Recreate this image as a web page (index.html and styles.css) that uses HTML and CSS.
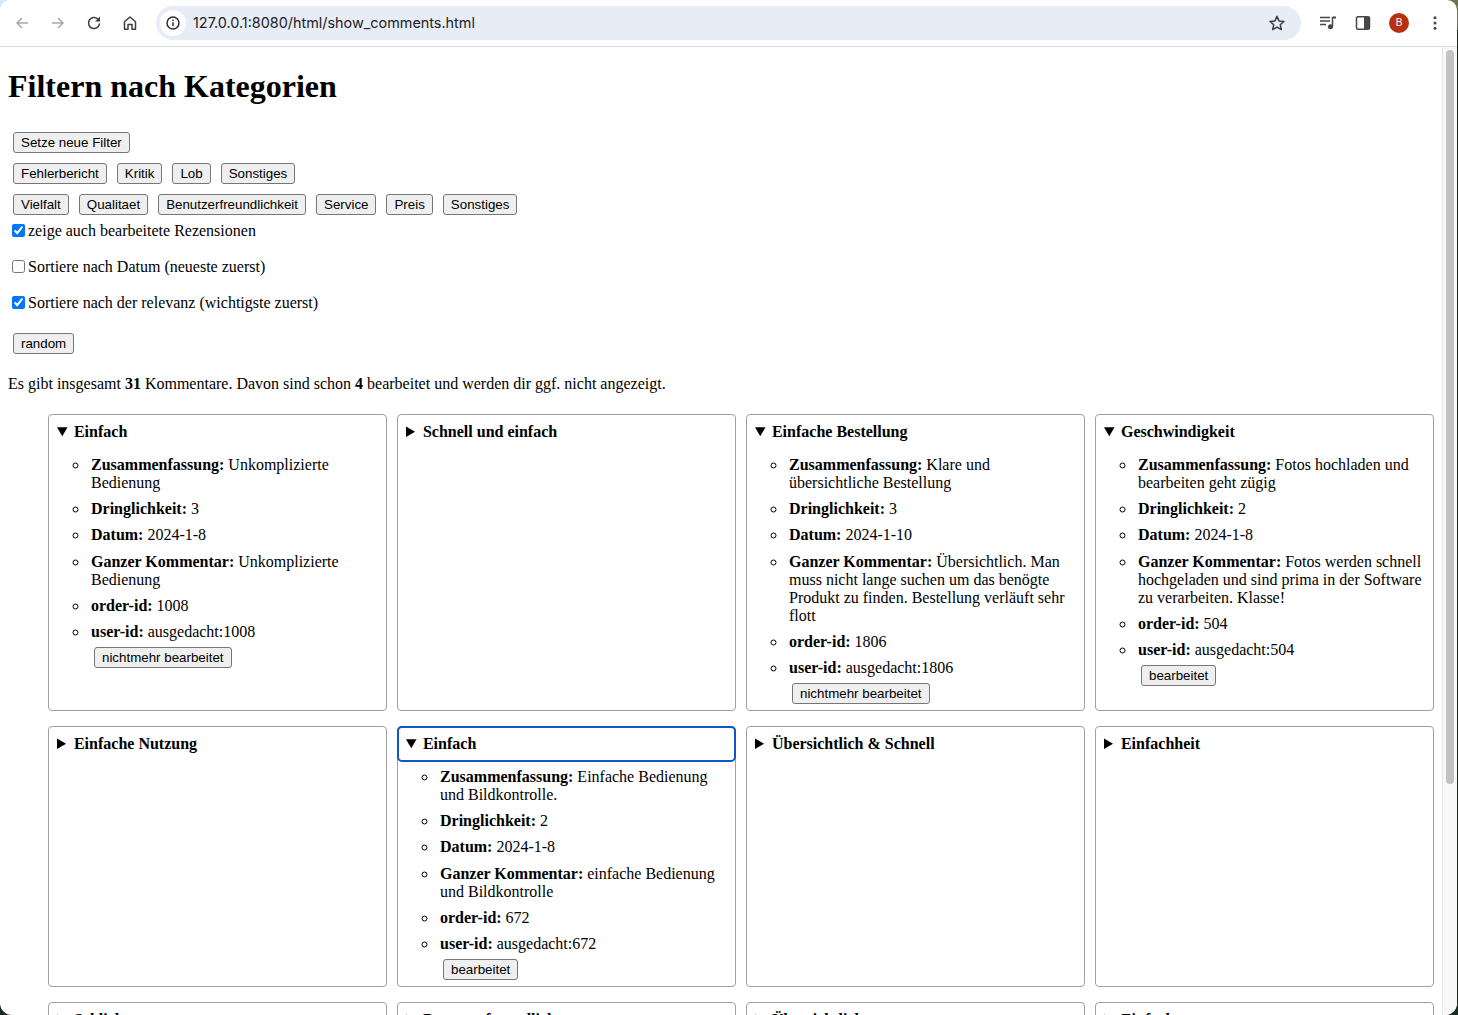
FILE: index.html
```html
<!DOCTYPE html>
<html lang="en">

<head>
    <meta charset="UTF-8">
    <title>show_comments</title>
    <link rel="stylesheet" href="styles.css">
</head>

<body>
    <div class="window">
        <div class="toolbar">
            <svg class="tool-icon first" viewBox="0 0 16 16"><path d="M14 8H3M8 3 3 8l5 5" fill="none" stroke="#a8a9ab" stroke-width="1.5"/></svg>
            <svg class="tool-icon" viewBox="0 0 16 16"><path d="M2 8h11M8 3l5 5-5 5" fill="none" stroke="#a8a9ab" stroke-width="1.5"/></svg>
            <svg class="tool-icon" viewBox="0 0 16 16"><path d="M13.500 8.500A5.500 5.500 0 1 1 11.800 4" fill="none" stroke="#3c3e41" stroke-width="1.600"/><path d="M14 1.500v5H9z" fill="#3c3e41"/></svg>
            <svg class="tool-icon" viewBox="0 0 16 16"><path d="M2.500 14.200V6.800L8 2l5.500 4.800v7.400H10V9.500H6v4.700z" fill="none" stroke="#3c3e41" stroke-width="1.500" stroke-linejoin="round"/></svg>
            <div class="omnibox">
                <span class="site-info">
                    <svg width="16" height="16" viewBox="0 0 16 16"><circle cx="8" cy="8" r="6" fill="none" stroke="#2b2d30" stroke-width="1.500"/><path d="M8 7.200v4M8 4.600v1.300" stroke="#2b2d30" stroke-width="1.500"/></svg>
                </span>
                <span class="url">127.0.0.1:8080/html/show_comments.html</span>
                <svg class="star" width="18" height="18" viewBox="0 0 18 18"><path d="M9 2.300l2 4.600 5 .5-3.800 3.300 1.100 4.900L9 13.100l-4.300 2.500 1.100-4.900L2 7.400l5-.5z" fill="none" stroke="#3c3e41" stroke-width="1.500" stroke-linejoin="round"/></svg>
            </div>
            <svg class="tool-icon media" viewBox="0 0 18 18"><path d="M1 3.500h10M1 7h10M1 10.500h6" stroke="#45474a" stroke-width="1.500"/><path d="M13.500 3v9" stroke="#45474a" stroke-width="1.500"/><path d="M13.500 2.500H17v2h-3.500z" fill="#45474a"/><circle cx="11.500" cy="12.800" r="2.500" fill="#45474a"/></svg>
            <svg class="tool-icon panel" viewBox="0 0 16 16"><rect x="1.500" y="1.800" width="13" height="12.400" rx="1.500" fill="none" stroke="#45474a" stroke-width="1.500"/><rect x="9" y="2" width="5.500" height="12" fill="#45474a"/></svg>
            <span class="avatar">B</span>
            <svg class="tool-icon dots" viewBox="0 0 16 16"><circle cx="8" cy="2.800" r="1.500" fill="#45474a"/><circle cx="8" cy="8" r="1.500" fill="#45474a"/><circle cx="8" cy="13.200" r="1.500" fill="#45474a"/></svg>
        </div>
        <div class="viewport">
            <main class="page">
                <h1>Filtern nach Kategorien</h1>
                <div class="button-row"><button>Setze neue Filter</button></div>
                <div class="button-row">
                    <button>Fehlerbericht</button>
                    <button>Kritik</button>
                    <button>Lob</button>
                    <button>Sonstiges</button>
                </div>
                <div class="button-row">
                    <button>Vielfalt</button>
                    <button>Qualitaet</button>
                    <button>Benutzerfreundlichkeit</button>
                    <button>Service</button>
                    <button>Preis</button>
                    <button>Sonstiges</button>
                </div>
                <label class="check"><input type="checkbox" checked> zeige auch bearbeitete Rezensionen</label>
                <label class="check"><input type="checkbox"> Sortiere nach Datum (neueste zuerst)</label>
                <label class="check"><input type="checkbox" checked> Sortiere nach der relevanz (wichtigste zuerst)</label>
                <div class="button-row random"><button>random</button></div>
                <p class="summary-line">Es gibt insgesamt <b>31</b> Kommentare. Davon sind schon <b>4</b> bearbeitet und werden dir ggf. nicht angezeigt.</p>

                <div class="comment-grid">
                    <details class="card" open>
                        <summary>Einfach</summary>
                        <ul>
                            <li><b>Zusammenfassung:</b> Unkomplizierte Bedienung</li>
                            <li><b>Dringlichkeit:</b> 3</li>
                            <li><b>Datum:</b> 2024-1-8</li>
                            <li><b>Ganzer Kommentar:</b> Unkomplizierte Bedienung</li>
                            <li><b>order-id:</b> 1008</li>
                            <li><b>user-id:</b> ausgedacht:1008<br><button>nichtmehr bearbeitet</button></li>
                        </ul>
                    </details>
                    <details class="card">
                        <summary>Schnell und einfach</summary>
                    </details>
                    <details class="card" open>
                        <summary>Einfache Bestellung</summary>
                        <ul>
                            <li><b>Zusammenfassung:</b> Klare und übersichtliche Bestellung</li>
                            <li><b>Dringlichkeit:</b> 3</li>
                            <li><b>Datum:</b> 2024-1-10</li>
                            <li><b>Ganzer Kommentar:</b> Übersichtlich. Man muss nicht lange suchen um das benögte Produkt zu finden. Bestellung verläuft sehr flott</li>
                            <li><b>order-id:</b> 1806</li>
                            <li><b>user-id:</b> ausgedacht:1806<br><button>nichtmehr bearbeitet</button></li>
                        </ul>
                    </details>
                    <details class="card" open>
                        <summary>Geschwindigkeit</summary>
                        <ul>
                            <li><b>Zusammenfassung:</b> Fotos hochladen und bearbeiten geht zügig</li>
                            <li><b>Dringlichkeit:</b> 2</li>
                            <li><b>Datum:</b> 2024-1-8</li>
                            <li><b>Ganzer Kommentar:</b> Fotos werden schnell hochgeladen und sind prima in der Software zu verarbeiten. Klasse!</li>
                            <li><b>order-id:</b> 504</li>
                            <li><b>user-id:</b> ausgedacht:504<br><button>bearbeitet</button></li>
                        </ul>
                    </details>

                    <details class="card">
                        <summary>Einfache Nutzung</summary>
                    </details>
                    <details class="card" open>
                        <summary class="focused">Einfach</summary>
                        <ul>
                            <li><b>Zusammenfassung:</b> Einfache Bedienung und Bildkontrolle.</li>
                            <li><b>Dringlichkeit:</b> 2</li>
                            <li><b>Datum:</b> 2024-1-8</li>
                            <li><b>Ganzer Kommentar:</b> einfache Bedienung und Bildkontrolle</li>
                            <li><b>order-id:</b> 672</li>
                            <li><b>user-id:</b> ausgedacht:672<br><button>bearbeitet</button></li>
                        </ul>
                    </details>
                    <details class="card">
                        <summary>Übersichtlich &amp; Schnell</summary>
                    </details>
                    <details class="card">
                        <summary>Einfachheit</summary>
                    </details>

                    <details class="card">
                        <summary>Schlicht</summary>
                    </details>
                    <details class="card">
                        <summary>Benutzerfreundlich</summary>
                    </details>
                    <details class="card">
                        <summary>Übersichtlich</summary>
                    </details>
                    <details class="card">
                        <summary>Einfach</summary>
                    </details>
                </div>
            </main>
            <div class="scrollbar"><div class="scroll-thumb"></div></div>
        </div>
    </div>
</body>

</html>
```

FILE: styles.css
```css
html, body {
    margin: 0;
    height: 100%;
    overflow: hidden;
}
body {
    background: linear-gradient(90deg, #d8e6fb 50%, #6f7550 50%) top / 100% 30px no-repeat, #1c2a24;
}
.window {
    height: 1015px;
    margin-right: 1px;
    display: flex;
    flex-direction: column;
    background-color: white;
    border-radius: 10px 10px 12px 12px;
    overflow: hidden;
}
.toolbar {
    flex: none;
    height: 46px;
    display: flex;
    align-items: center;
    border-bottom: 1px solid #dadce0;
    box-sizing: content-box;
}
.tool-icon {
    flex: none;
    width: 16px;
    height: 16px;
    margin-left: 20px;
}
.tool-icon.first {
    margin-left: 14px;
}
.omnibox {
    flex: 1;
    height: 34px;
    margin: 0 18px 0 18px;
    padding: 0 15px 0 4px;
    display: flex;
    align-items: center;
    background-color: #e8ecf6;
    border-radius: 17px;
}
.site-info {
    width: 26px;
    height: 26px;
    border-radius: 50%;
    background-color: white;
    display: flex;
    align-items: center;
    justify-content: center;
}
.url {
    flex: 1;
    margin-left: 7px;
    margin-bottom: 1px;
    font-family: Inter, "Liberation Sans", sans-serif;
    font-size: 14.4px;
    color: #202124;
}
.tool-icon.media {
    width: 18px;
    height: 18px;
    margin-left: 0;
}
.tool-icon.panel {
    margin-left: 18px;
}
.avatar {
    flex: none;
    width: 20px;
    height: 20px;
    margin-left: 18px;
    border-radius: 50%;
    background-color: #b9300f;
    color: white;
    font-family: "Liberation Sans", sans-serif;
    font-size: 10px;
    line-height: 20px;
    text-align: center;
}
.tool-icon.dots {
    margin-left: 18px;
    margin-right: 14px;
}
.viewport {
    flex: 1;
    min-height: 0;
    display: flex;
    overflow: hidden;
}
.page {
    flex: 1;
    min-width: 0;
    padding: 8px;
    font-family: "Liberation Serif", serif;
    font-size: 16px;
    color: black;
}
.scrollbar {
    flex: none;
    width: 15px;
    padding: 3px 3px 0 3px;
    box-sizing: border-box;
    background-color: #f8f8f8;
    border-left: 1px solid #e6e6e6;
}
.scroll-thumb {
    height: 734px;
    background-color: #c2c2c2;
    border-radius: 4px;
}
h1 {
    font-size: 32px;
    margin: 13px 0 22px;
}
button {
    font-family: "Liberation Sans", sans-serif;
    font-size: 13.33px;
    height: 21px;
    padding: 1px 7px;
    background-color: #efefef;
    border: 1px solid #767676;
    border-radius: 3px;
    color: black;
}
.button-row {
    display: flex;
    gap: 10px;
    padding: 5px;
}
.check {
    display: flex;
    align-items: center;
    height: 20px;
    margin-bottom: 16px;
}
.button-row + .check {
    margin-top: 1px;
}
.check input {
    margin: 0 3px 2px 4px;
}
.button-row.random {
    margin-top: -1px;
}
.summary-line {
    margin: 16px 0 21px;
}
.comment-grid {
    display: grid;
    grid-template-columns: repeat(4, 1fr);
    gap: 15.1px 10px;
    margin-left: 40px;
}
.card {
    border: 1px solid #a0a0a0;
    border-radius: 4px;
}
summary {
    padding: 8px;
    font-weight: bold;
    line-height: 18px;
}
summary.focused {
    outline: 2px solid #0b57c8;
    outline-offset: -1px;
    border-radius: 4px;
}
.card ul {
    list-style-type: circle;
    margin: 7px 0 5.55px;
    padding-left: 40px;
    padding-right: 10px;
}
.card li {
    padding-left: 2px;
    line-height: 18px;
    margin-bottom: 8.18px;
}
.card li:last-child {
    margin-bottom: 0;
}
.card li button {
    display: block;
    margin: 6.55px 0 0 3px;
}
```
